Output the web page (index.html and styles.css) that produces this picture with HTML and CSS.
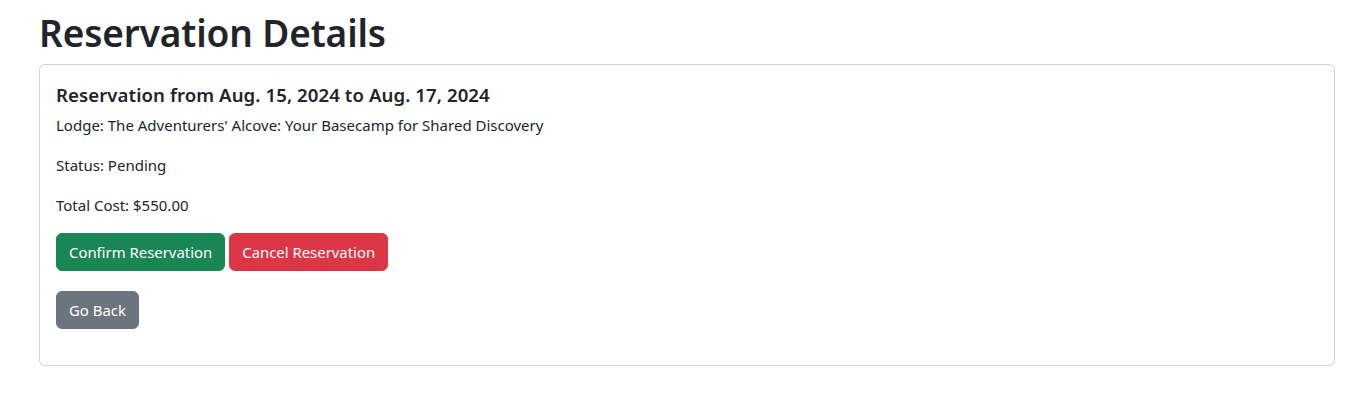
FILE: index.html
```html
<!DOCTYPE html>
<html lang="en">
<head>
<meta charset="utf-8">
<title>Reservation Details</title>
<link rel="stylesheet" href="styles.css">
</head>
<body>
<div class="container">
  <h1 class="page-title">Reservation Details</h1>
  <div class="card">
    <div class="card-body">
      <h5 class="card-title">Reservation from Aug. 15, 2024 to Aug. 17, 2024</h5>
      <p class="card-text">Lodge: The Adventurers' Alcove: Your Basecamp for Shared Discovery</p>
      <p class="card-text">Status: Pending</p>
      <p class="card-text">Total Cost: $550.00</p>
      <div class="actions">
        <button class="btn btn-success">Confirm Reservation</button>
        <button class="btn btn-danger">Cancel Reservation</button>
      </div>
      <div class="actions">
        <a class="btn btn-secondary" href="#">Go Back</a>
      </div>
    </div>
  </div>
</div>
</body>
</html>
```

FILE: styles.css
```css
* { box-sizing: border-box; }
html, body {
  margin: 0;
  background: #fff;
}
body {
  font-family: "Noto Sans", "Open Sans", sans-serif;
  font-size: 15px;
  line-height: 24px;
  color: #212529;
}
.container {
  padding: 9px 22px 0 39px;
}
.page-title {
  margin: 0 0 7px;
  font-size: 37px;
  font-weight: 600;
  letter-spacing: -0.13px;
  line-height: 48px;
}
.card {
  border: 1px solid rgba(0, 0, 0, 0.175);
  border-radius: 6px;
  background: #fff;
}
.card-body {
  padding: 16px;
}
.card-title {
  margin: 0 0 8px;
  padding-top: 2px;
  height: 24px;
  font-size: 18.6px;
  font-weight: 600;
  letter-spacing: 0.08px;
  line-height: 24px;
}
.card-text {
  margin: 0 0 16px;
}
.actions {
  display: flex;
  gap: 4px;
  margin-bottom: 20px;
}
.btn {
  display: inline-block;
  padding: 6px 12px;
  font-family: inherit;
  font-size: 14.9px;
  line-height: 24px;
  color: #fff;
  border: 1px solid transparent;
  border-radius: 6px;
  text-decoration: none;
  cursor: pointer;
}
.btn-success { background: #198754; border-color: #198754; }
.btn-danger { background: #dc3545; border-color: #dc3545; }
.btn-secondary { background: #6c757d; border-color: #6c757d; }
```
